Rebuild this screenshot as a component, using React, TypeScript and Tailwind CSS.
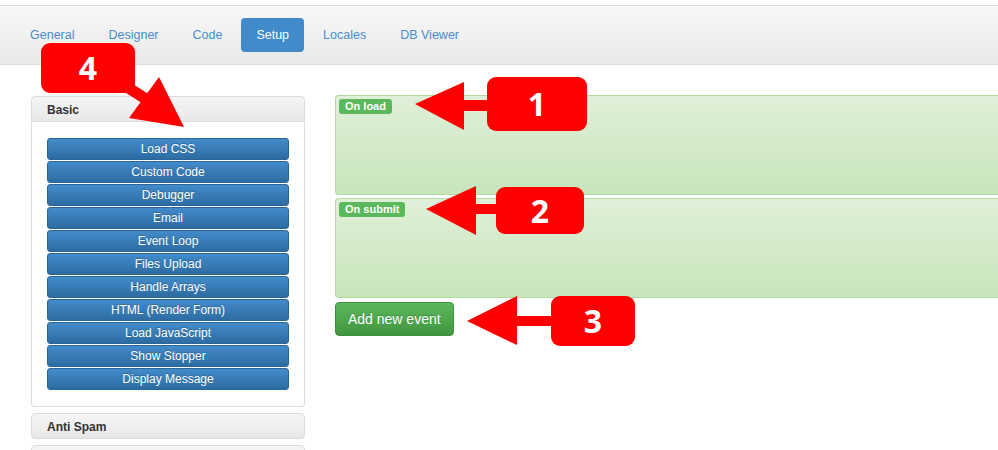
import React from 'react';

const tabs = ['General', 'Designer', 'Code', 'Setup', 'Locales', 'DB Viewer'];

const basicActions = [
  'Load CSS',
  'Custom Code',
  'Debugger',
  'Email',
  'Event Loop',
  'Files Upload',
  'Handle Arrays',
  'HTML (Render Form)',
  'Load JavaScript',
  'Show Stopper',
  'Display Message',
];

// Navigation pills across the top bar
const NavBar: React.FC = () => (
  <div className="mt-[5px] h-[60px] border-y border-[#dcdcdc] bg-gradient-to-b from-[#f8f8f8] to-[#e9e9e9] flex items-center pl-[15px] gap-[4px]">
    {tabs.map((tab) => (
      <div
        key={tab}
        className={
          tab === 'Setup'
            ? 'h-[34px] px-[15px] flex items-center rounded-[4px] bg-[#428bca] text-white text-[12.5px]'
            : 'h-[34px] px-[15px] flex items-center text-[#4a8ccc] text-[12.5px]'
        }
      >
        {tab}
      </div>
    ))}
  </div>
);

const PanelHeader: React.FC<{ title: string; rounded?: string }> = ({ title, rounded = 'rounded-[4px]' }) => (
  <div
    className={`h-[26px] flex items-center pl-[15px] pt-[2px] border border-[#dcdcdc] bg-gradient-to-b from-[#f5f5f5] to-[#e8e8e8] text-[12px] font-bold text-[#333] ${rounded}`}
  >
    {title}
  </div>
);

const ActionButton: React.FC<{ label: string }> = ({ label }) => (
  <div className="h-[22px] flex items-center justify-center rounded-[3px] border border-[#2b669a] bg-gradient-to-b from-[#428bca] to-[#2d6ca2] text-white text-[12px] [text-shadow:0_-1px_0_rgba(0,0,0,0.2)]">
    {label}
  </div>
);

const EventWell: React.FC<{ label: string }> = ({ label }) => (
  <div className="h-[100px] rounded-l-[4px] border border-r-0 border-[#b2dba1] bg-gradient-to-b from-[#dff0d8] to-[#c8e5bc] pt-[3px] pl-[3px]">
    <div className="w-fit rounded-[3px] bg-[#5cb85c] px-[6px] py-[1px] text-[11px] leading-[13px] font-bold text-white">
      {label}
    </div>
  </div>
);

// Red callout markers drawn over the page
const Callout: React.FC<{ n: string; className: string }> = ({ n, className }) => (
  <div
    className={`absolute flex items-center justify-center rounded-[9px] bg-[#ff0000] text-white font-bold text-[32px] [font-family:'Open_Sans','DejaVu_Sans',sans-serif] ${className}`}
  >
    {n}
  </div>
);

const Arrows: React.FC = () => (
  <svg className="absolute inset-0 pointer-events-none" width="998" height="450">
    <g fill="#ff0000" stroke="none">
      {/* 1 */}
      <rect x="460" y="100" width="30" height="11" />
      <polygon points="415,104 464,82 464,130" />
      {/* 2 */}
      <rect x="472" y="204" width="28" height="10" />
      <polygon points="426,209 476,186 476,235" />
      {/* 3 */}
      <rect x="513" y="316" width="42" height="10" />
      <polygon points="467,321 517,296 517,345" />
      {/* 4 */}
      <polygon points="159,77 129,118 184,127" />
    </g>
    <line x1="100" y1="70" x2="146" y2="99" stroke="#ff0000" strokeWidth="11" />
  </svg>
);

export default function App() {
  return (
    <div className="relative w-[998px] h-[450px] overflow-hidden bg-white [font-family:'Liberation_Sans',Arial,sans-serif]">
      <NavBar />

      <div className="flex pt-[31px] pl-[31px] gap-[30px]">
        {/* Left: action groups */}
        <div className="w-[274px] shrink-0 flex flex-col gap-[6px]">
          <div>
            <PanelHeader title="Basic" rounded="rounded-t-[4px]" />
            <div className="border border-t-0 border-[#dcdcdc] rounded-b-[4px] px-[15px] pt-[16px] pb-[16px] flex flex-col gap-[1px]">
              {basicActions.map((a) => (
                <ActionButton key={a} label={a} />
              ))}
            </div>
          </div>
          <PanelHeader title="Anti Spam" />
          <PanelHeader title="" />
        </div>

        {/* Right: event wells */}
        <div className="flex-1 flex flex-col gap-[3px] -mt-[1px]">
          <EventWell label="On load" />
          <EventWell label="On submit" />
          <div className="mt-[1px]">
            <button className="h-[34px] px-[12px] rounded-[4px] border border-[#3e8f3e] bg-gradient-to-b from-[#5cb85c] to-[#419641] text-white text-[14px] [text-shadow:0_-1px_0_rgba(0,0,0,0.2)]">
              Add new event
            </button>
          </div>
        </div>
      </div>

      <Arrows />
      <Callout n="4" className="left-[41px] top-[43px] w-[94px] h-[50px]" />
      <Callout n="1" className="left-[487px] top-[77px] w-[100px] h-[54px]" />
      <Callout n="2" className="left-[496px] top-[187px] w-[88px] h-[47px]" />
      <Callout n="3" className="left-[551px] top-[296px] w-[84px] h-[50px]" />
    </div>
  );
}
